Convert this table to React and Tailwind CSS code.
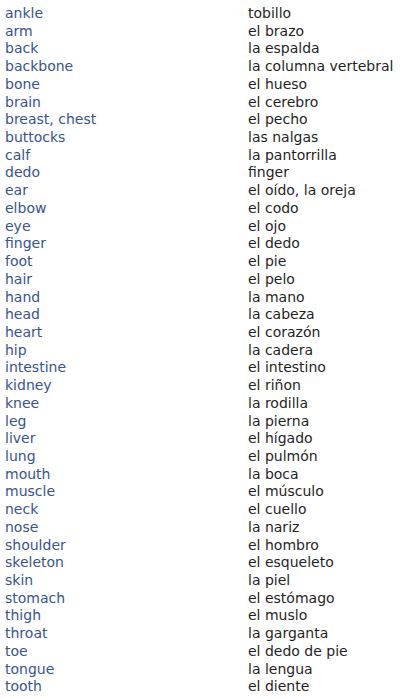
const rows = [
  ["ankle", "tobillo"],
  ["arm", "el brazo"],
  ["back", "la espalda"],
  ["backbone", "la columna vertebral"],
  ["bone", "el hueso"],
  ["brain", "el cerebro"],
  ["breast, chest", "el pecho"],
  ["buttocks", "las nalgas"],
  ["calf", "la pantorrilla"],
  ["dedo", "finger"],
  ["ear", "el oído, la oreja"],
  ["elbow", "el codo"],
  ["eye", "el ojo"],
  ["finger", "el dedo"],
  ["foot", "el pie"],
  ["hair", "el pelo"],
  ["hand", "la mano"],
  ["head", "la cabeza"],
  ["heart", "el corazón"],
  ["hip", "la cadera"],
  ["intestine", "el intestino"],
  ["kidney", "el riñon"],
  ["knee", "la rodilla"],
  ["leg", "la pierna"],
  ["liver", "el hígado"],
  ["lung", "el pulmón"],
  ["mouth", "la boca"],
  ["muscle", "el músculo"],
  ["neck", "el cuello"],
  ["nose", "la nariz"],
  ["shoulder", "el hombro"],
  ["skeleton", "el esqueleto"],
  ["skin", "la piel"],
  ["stomach", "el estómago"],
  ["thigh", "el muslo"],
  ["throat", "la garganta"],
  ["toe", "el dedo de pie"],
  ["tongue", "la lengua"],
  ["tooth", "el diente"],
];

export default function App() {
  return (
    <div className="w-[400px] h-[698px] bg-white overflow-hidden pt-[5px] pl-[5px] font-['DejaVu_Sans',sans-serif] text-[14px] leading-[17.72px]">
      {rows.map(([en, es]) => (
        <div key={en} className="grid grid-cols-[243px_1fr]">
          <span className="text-[#36548f] whitespace-nowrap">{en}</span>
          <span className="text-[#1f1f1f] whitespace-nowrap">{es}</span>
        </div>
      ))}
    </div>
  );
}
